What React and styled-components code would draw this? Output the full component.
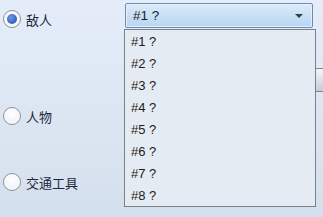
import React from "react";
import styled, { createGlobalStyle } from "styled-components";

const GlobalStyle = createGlobalStyle`
	html, body {
		margin: 0;
		padding: 0;
		width: 323px;
		height: 217px;
		overflow: hidden;
	}
	body {
		font-family: "Noto Sans CJK SC", "Liberation Sans", sans-serif;
		background: linear-gradient(180deg, #e4edf9 0%, #dbe5f2 60%, #d4dfed 100%);
	}
`;

const items = ["#1 ?", "#2 ?", "#3 ?", "#4 ?", "#5 ?", "#6 ?", "#7 ?", "#8 ?"];
const options = [
	{ label: "敌人", checked: true, space: 0 },
	{ label: "人物", checked: false, space: 79 },
	{ label: "交通工具", checked: false, space: 48 },
];

const App = () => {
	return (
		<>
			<GlobalStyle />
			<Page>
				<Options>
					{options.map((o) => (
						<Option key={o.label} $space={o.space}>
							<Radio $checked={o.checked} />
							<span>{o.label}</span>
						</Option>
					))}
				</Options>
				<ComboArea>
					<Combo>
						<span>#1 ?</span>
						<Arrow />
					</Combo>
					<HiddenButton />
					<List>
						{items.map((t) => (
							<Item key={t}>{t}</Item>
						))}
					</List>
				</ComboArea>
			</Page>
		</>
	);
};

const Page = styled.div`
	display: flex;
	height: 217px;
	padding: 10px 0 0 3px;
	box-sizing: border-box;
`;

const Options = styled.div`
	display: flex;
	flex-direction: column;
	width: 122px;
`;

const Option = styled.div`
	display: flex;
	align-items: center;
	gap: 5px;
	height: 18px;
	margin-top: ${(p) => p.$space}px;
	font-size: 13px;
	color: #1e2a3a;
`;

const Radio = styled.div`
	width: 16px;
	height: 16px;
	border-radius: 50%;
	border: 1px solid #8a8f96;
	background: radial-gradient(circle at 50% 40%, #ffffff 0%, #f2f4f7 60%, #dfe3e8 100%);
	position: relative;
	box-shadow: inset 0 0 0 1px #fff;

	&::after {
		content: "";
		display: ${(p) => (p.$checked ? "block" : "none")};
		position: absolute;
		left: 3px;
		top: 3px;
		width: 10px;
		height: 10px;
		border-radius: 50%;
		background: radial-gradient(circle at 40% 35%, #6f9be0 0%, #3b68c2 60%, #2b53a8 100%);
	}
`;

const ComboArea = styled.div`
	position: relative;
	margin-top: -7px;
	width: 198px;
`;

const Combo = styled.div`
	display: flex;
	align-items: center;
	justify-content: space-between;
	width: 188px;
	height: 25px;
	box-sizing: border-box;
	border: 1px solid #6d8bb3;
	border-radius: 2px;
	box-shadow: inset 0 0 0 1px #e6f0fb;
	background: linear-gradient(180deg, #dcebfb 0%, #c9e0f7 50%, #b8d5f1 100%);
	padding: 0 9px 0 7px;
	font-family: "Liberation Sans", sans-serif;
	font-size: 13.5px;
	color: #1c1c1c;
`;

const Arrow = styled.div`
	width: 0;
	height: 0;
	border-left: 4px solid transparent;
	border-right: 4px solid transparent;
	border-top: 4px solid #3a3f46;
`;

const HiddenButton = styled.div`
	position: absolute;
	left: 190px;
	top: 65px;
	width: 10px;
	height: 22px;
	border-top: 1px solid #7d8794;
	border-bottom: 1px solid #7d8794;
	background: linear-gradient(180deg, #f3f5f8 0%, #dde2e8 50%, #c6ccd4 100%);
`;

const List = styled.div`
	position: absolute;
	left: -1px;
	top: 26px;
	width: 192px;
	box-sizing: border-box;
	border: 1px solid #7b828c;
	background: #e5ebf3;
	padding: 1px 0 0;
	display: flex;
	flex-direction: column;
`;

const Item = styled.div`
	height: 21.9px;
	display: flex;
	align-items: center;
	padding-left: 6px;
	font-family: "Liberation Sans", sans-serif;
	font-size: 13px;
	color: #1c1c1c;
`;

export default App;
